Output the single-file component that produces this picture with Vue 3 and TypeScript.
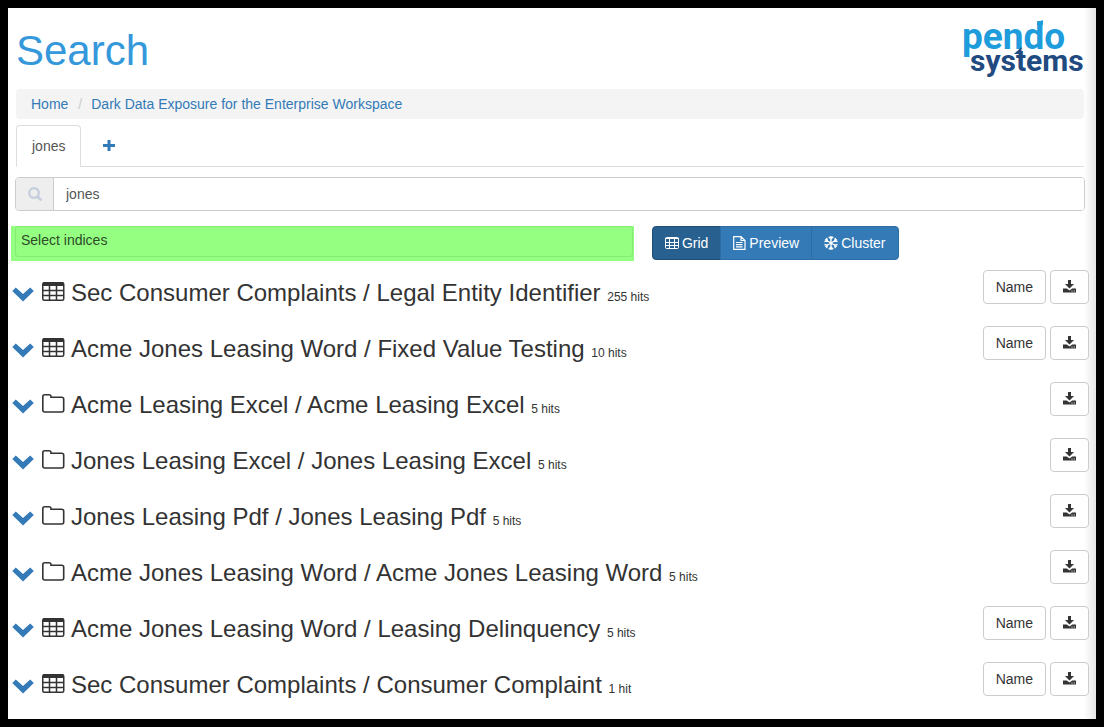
<script setup lang="ts">
import { ref } from 'vue'

interface ResultGroup {
  title: string
  hits: string
  kind: 'table' | 'folder'
}

const query = ref('jones')
const indices = ref('')
const view = ref('Grid')
const views = ['Grid', 'Preview', 'Cluster']

const results: ResultGroup[] = [
  { title: 'Sec Consumer Complaints / Legal Entity Identifier', hits: '255 hits', kind: 'table' },
  { title: 'Acme Jones Leasing Word / Fixed Value Testing', hits: '10 hits', kind: 'table' },
  { title: 'Acme Leasing Excel / Acme Leasing Excel', hits: '5 hits', kind: 'folder' },
  { title: 'Jones Leasing Excel / Jones Leasing Excel', hits: '5 hits', kind: 'folder' },
  { title: 'Jones Leasing Pdf / Jones Leasing Pdf', hits: '5 hits', kind: 'folder' },
  { title: 'Acme Jones Leasing Word / Acme Jones Leasing Word', hits: '5 hits', kind: 'folder' },
  { title: 'Acme Jones Leasing Word / Leasing Delinquency', hits: '5 hits', kind: 'table' },
  { title: 'Sec Consumer Complaints / Consumer Complaint', hits: '1 hit', kind: 'table' },
]
</script>

<template>
  <div class="page">
    <header class="header">
      <h1>Search</h1>
      <svg class="logo" width="124" height="60" viewBox="0 0 124 60" role="img" aria-label="pendo systems">
        <text class="logo-top" x="1" y="30">pendo</text>
        <path d="M76 3.5 82 1V6H76Z" fill="#1f9cdc" />
        <text class="logo-bottom" x="9" y="52">systems</text>
        <path d="M53 35 60.5 28V35Z" fill="#204a80" />
      </svg>
    </header>

    <nav class="breadcrumb" aria-label="Breadcrumb">
      <a href="#">Home</a>
      <span class="divider">/</span>
      <a href="#">Dark Data Exposure for the Enterprise Workspace</a>
    </nav>

    <div class="tabs">
      <button type="button" class="tab active">jones</button>
      <button type="button" class="tab add" aria-label="Add search">
        <svg width="12" height="12" viewBox="0 0 12 12"><path d="M6 0v11M0 5.5h12" stroke="#337ab7" stroke-width="3" /></svg>
      </button>
    </div>

    <div class="search">
      <label class="addon" for="query" aria-label="Search text">
        <svg width="14" height="14" viewBox="0 0 14 14" fill="none" stroke="#c3cddb">
          <circle cx="6" cy="6" r="4.8" stroke-width="2.2" />
          <path d="M9.5 9.5 12.5 12.5" stroke-width="2.6" stroke-linecap="round" />
        </svg>
      </label>
      <input id="query" v-model="query" type="text" />
    </div>

    <div class="toolbar">
      <div class="indices">
        <input v-model="indices" type="text" placeholder="Select indices" aria-label="Select indices" />
      </div>
      <div class="views">
        <button v-for="name in views" :key="name" type="button" :class="{ active: view === name }" @click="view = name">
          <svg v-if="name === 'Grid'" width="14" height="12" viewBox="0 0 14 12" fill="none" stroke="#fff">
            <rect x=".5" y=".5" width="13" height="11" rx="1" />
            <path d="M0 1.5h14M0 5.5h14M0 8.5h14M4.5 1v11M9.5 1v11" />
          </svg>
          <svg v-else-if="name === 'Preview'" width="13" height="14" viewBox="0 0 13 14" fill="none" stroke="#fff" stroke-width="1.2">
            <path d="M.7.6H8l4 4v8.8H.7ZM8 .5V4.5h4M3 6.5h6.5M3 8.7h6.5M3 10.9h6.5" />
          </svg>
          <svg v-else width="14" height="14" viewBox="0 0 14 14" fill="none" stroke="#fff" stroke-width="1.4">
            <path d="M7 0v14M1 3.5l12 7M1 10.5l12-7M4.8 .8 7 3l2.2-2.2M4.8 13.2 7 11l2.200 2.200M.5 5.500l2.800-.8L2.600 1.800M13.500 8.500l-2.800.8.700 2.900M.5 8.500l2.800.8L2.600 12.200M13.500 5.500l-2.800-.8.700-2.900" />
          </svg>
          {{ name }}
        </button>
      </div>
    </div>

    <main class="results">
      <section v-for="item in results" :key="item.title" class="row">
        <button type="button" class="toggle" aria-label="Expand group">
          <svg width="22" height="15" viewBox="0 0 22 15"><path d="M.3 4 3.8.4 11 7 18.2.4 21.8 4 11 14.400Z" fill="#337ab7" /></svg>
        </button>
        <svg v-if="item.kind === 'table'" class="kind" width="23" height="19" viewBox="0 0 23 19">
          <rect x=".75" y=".75" width="21" height="17.5" rx="1.5" fill="none" stroke="#333" stroke-width="1.5" />
          <path d="M1 .5h20.5v3.500H1Z" fill="#333" />
          <path d="M1 8.5h21M1 13.500h21M7.5 3v15M14.500 3v15" stroke="#333" stroke-width="1.5" />
        </svg>
        <svg v-else class="kind" width="23" height="19" viewBox="0 0 23 19">
          <path d="M.8 2.8Q.8.8 2.8.8H7q2 0 2 2v.4h10.700q2 0 2 2v10.800q0 2-2 2H2.8q-2 0-2-2Z" fill="none" stroke="#333" stroke-width="1.6" />
        </svg>
        <h3>{{ item.title }} <small>{{ item.hits }}</small></h3>
        <div class="actions">
          <button v-if="item.kind === 'table'" type="button">Name</button>
          <button type="button" class="download" aria-label="Download">
            <svg width="13" height="14" viewBox="0 0 13 14" fill="#333">
              <path d="M5 0h3v4h3L6.5 8.5 2 4h3Z" />
              <path d="M0 8.5h3.8L6.5 10.6 9.2 8.5H13v4H0ZM8.5 10.5v1h1v-1ZM10.7 10.5v1h1v-1Z" fill-rule="evenodd" />
            </svg>
          </button>
        </div>
      </section>
    </main>
  </div>
</template>

<style>
body {
  margin: 0;
  background: #000;
}
</style>

<style scoped>
.page,
.page * {
  box-sizing: border-box;
}

.page {
  min-height: 100vh;
  border: 8px solid #000;
  padding: 0 7px 0 3px;
  background: linear-gradient(to left, #e6e6e6, #fff 12px);
  color: #333;
  font: 14px/20px "Liberation Sans", Arial, sans-serif;
}

button,
input {
  font: inherit;
  color: inherit;
  margin: 0;
}

a {
  color: #337ab7;
  text-decoration: none;
}

.header {
  display: flex;
  justify-content: space-between;
  height: 81px;
  padding: 11px 4px 0 5px;
}

h1 {
  margin: 9px 0 0;
  color: #3498db;
  font-size: 42px;
  font-weight: 400;
  line-height: 46px;
}

.logo {
  overflow: visible;
  font-family: Roboto, sans-serif;
  font-weight: 700;
}

.logo-top {
  fill: #1f9cdc;
  font-size: 37px;
}

.logo-bottom {
  fill: #204a80;
  font-size: 30px;
}

.breadcrumb {
  display: flex;
  margin: 0 5px;
  padding: 5px 15px;
  border-radius: 4px;
  background: #f4f4f4;
}

.divider {
  padding: 0 9px 0 10px;
  color: #ccc;
}

.tabs {
  display: flex;
  margin: 6px 5px 10px;
  border-bottom: 1px solid #ddd;
}

.tab {
  margin-bottom: -1px;
  padding: 10px 15px;
  border: 1px solid transparent;
  border-radius: 4px 4px 0 0;
  background: none;
}

.tab.active {
  border-color: #ddd #ddd #fff;
  background: #fff;
  color: #555;
}

.add {
  display: flex;
  align-items: center;
  margin-left: 6px;
}

.search {
  display: flex;
  height: 34px;
  margin: 0 4px;
  border: 1px solid #ccc;
  border-radius: 4px;
  overflow: hidden;
  background: #fff;
}

.addon {
  display: flex;
  align-items: center;
  justify-content: center;
  width: 38px;
  border-right: 1px solid #ccc;
  background: #eee;
}

.search input {
  flex: 1;
  min-width: 0;
  padding: 0 12px;
  border: 0;
  color: #555;
}

.toolbar {
  display: grid;
  grid-template-columns: 58% 1fr;
  gap: 18px;
  margin: 15px 4px 0 0;
}

.indices {
  height: 35px;
  padding: 0 1px 4px 4px;
  background: #95ff82;
}

.indices input {
  display: block;
  width: 100%;
  height: 31px;
  padding: 0 5px 4px;
  border: 1px solid #87ea77;
  border-radius: 3px;
  background: transparent;
}

.indices input::placeholder {
  color: #2c4b27;
  opacity: 1;
}

.views {
  display: flex;
  height: 34px;
}

.views button {
  display: flex;
  align-items: center;
  gap: 3px;
  padding: 0 12px;
  border: 1px solid #2e6da4;
  background: #337ab7;
  color: #fff;
}

.views button + button {
  margin-left: -1px;
}

.views button:first-child {
  border-radius: 4px 0 0 4px;
}

.views button:last-child {
  border-radius: 0 4px 4px 0;
}

.views button.active {
  border-color: #204d74;
  background: #286090;
}

.results {
  padding-top: 9px;
}

.row {
  display: flex;
  height: 56px;
}

.row:last-child {
  height: 48px;
}

.toggle {
  align-self: flex-start;
  display: flex;
  margin: 17px 8px 0 1px;
  padding: 0;
  border: 0;
  background: none;
}

.kind {
  flex: none;
  margin: 12px 6px 0 0;
}

h3 {
  margin: 10px 0 0;
  font-size: 24px;
  font-weight: 400;
  line-height: 26px;
}

h3 small {
  font-size: 12px;
}

.actions {
  display: flex;
  gap: 4px;
  height: 34px;
  margin-left: auto;
}

.actions button {
  display: flex;
  align-items: center;
  padding: 0 12px;
  border: 1px solid #ccc;
  border-radius: 4px;
  background: #fff;
}
</style>
